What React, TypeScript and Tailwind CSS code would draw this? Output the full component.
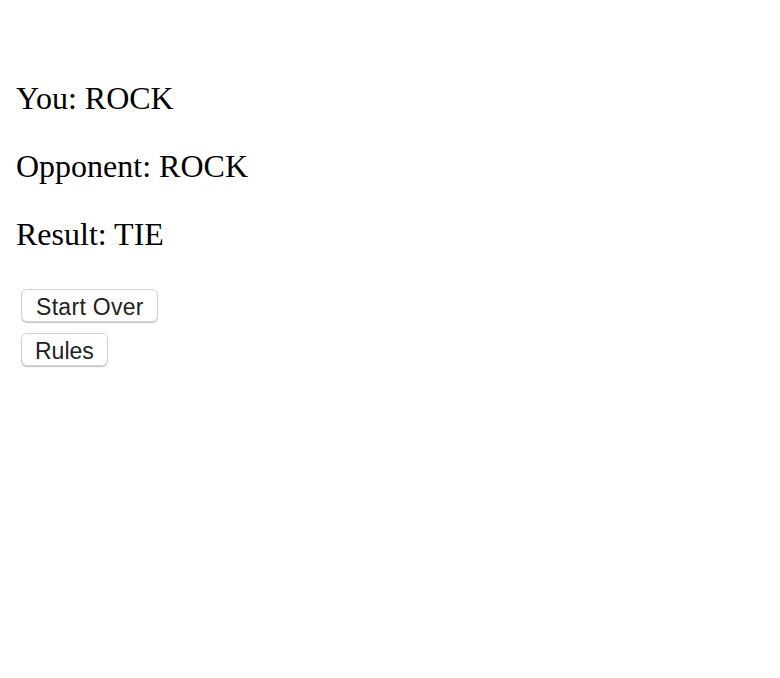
export default function App() {
  const btn =
    "block ml-[5px] h-[33px] pt-[3px] rounded-[6px] border border-[#d4d4d4] bg-white text-[#222] text-[23px] leading-none shadow-[0_1px_1px_rgba(0,0,0,0.25)]";
  return (
    <div className="min-h-[678px] bg-white pt-[80px] pl-[16px]" style={{ fontFamily: '"Liberation Serif", "Times New Roman", serif' }}>
      <p className="text-[32px] leading-[36px] text-black mb-[32px]">You: ROCK</p>
      <p className="text-[32px] leading-[36px] text-black mb-[32px]">Opponent: ROCK</p>
      <p className="text-[32px] leading-[36px] text-black mb-[37px]">Result: TIE</p>
      <div className="flex flex-col items-start gap-[11px]" style={{ fontFamily: '"Liberation Sans", Arial, sans-serif' }}>
        <button className={`${btn} pl-[14px] pr-[13px] tracking-[0.3px]`}>Start Over</button>
        <button className={`${btn} px-[13px]`}>Rules</button>
      </div>
    </div>
  );
}
